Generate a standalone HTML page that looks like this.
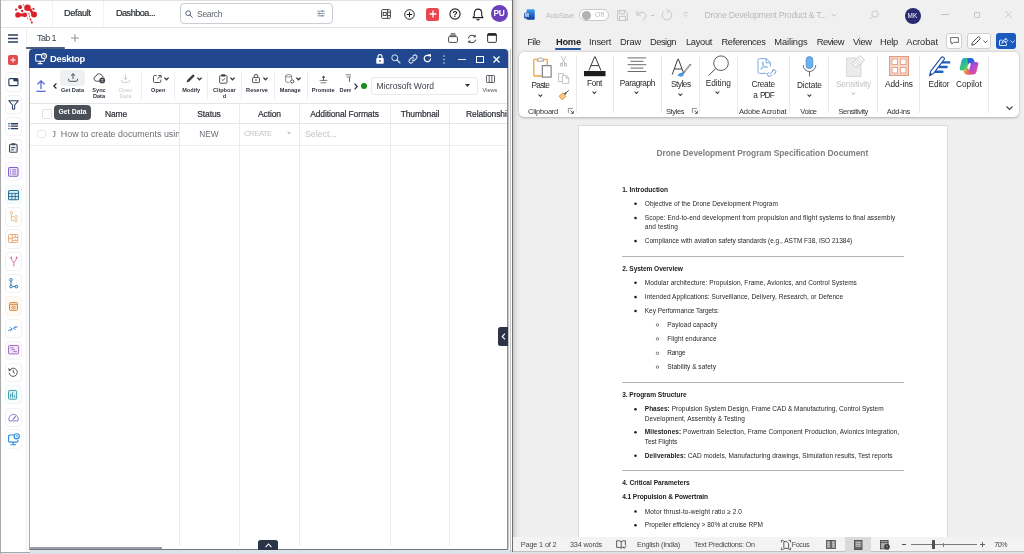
<!DOCTYPE html>
<html lang="en">
<head>
<meta charset="utf-8">
<title>Desktop - Drone Development Program Specification Document</title>
<style>
*{box-sizing:border-box;margin:0;padding:0}
html,body{width:1024px;height:554px;overflow:hidden;background:#fff}
body{position:relative;font-family:"Liberation Sans",sans-serif;color:#222;-webkit-font-smoothing:antialiased}
.a{position:absolute}
.t{position:absolute;white-space:nowrap;line-height:1}
.c{transform:translateX(-50%);text-align:center}
svg{position:absolute;overflow:visible}
/* ---------- LEFT APP ---------- */
#L{left:0;top:0;width:512px;height:554px;background:#fff;overflow:hidden;will-change:transform}
#R{left:0;top:0;width:1024px;height:554px;overflow:hidden;will-change:transform}
.vsep{position:absolute;width:1px;background:#eceef1}
.sb{position:absolute;left:6px;width:14px;height:14px;border-radius:3px;background:#fff;box-shadow:0 0 0 1px #eceef2}
.tl{position:absolute;white-space:nowrap;line-height:1;font-size:5.6px;font-weight:bold;color:#2f3540;transform:translateX(-50%);text-align:center}
.hd{position:absolute;white-space:nowrap;line-height:1;font-size:8.5px;letter-spacing:-0.12px;color:#2b2f36;-webkit-text-stroke:0.2px #2b2f36;top:109.7px;transform:translateX(-50%)}
.gl{position:absolute;width:1px;background:#eaebec;top:103px;height:443px}
/* ---------- WORD ---------- */
.rsep{position:absolute;width:1px;background:#e9e9e9;top:56px;height:57px}
</style>
</head>
<body>
<div id="L" class="a">
<!--LSTART-->
<!-- top bar -->
<div class="a" style="left:0;top:0;width:512px;height:1px;background:#e2e2e2"></div>
<div class="a" style="left:0;top:0;width:1px;height:554px;background:#a9a9a9"></div>
<div class="a" style="left:1px;top:27px;width:511px;height:1px;background:#e3e5e9"></div>
<svg style="left:0;top:0" width="50" height="27" viewBox="0 0 50 27">
 <g fill="#d9232e">
  <circle cx="16.1" cy="9.6" r="1.15"/><circle cx="20.1" cy="7.1" r="2.05"/><circle cx="23.4" cy="4.8" r="0.6"/>
  <circle cx="27.5" cy="7.8" r="3.3"/><circle cx="22.2" cy="11.1" r="1.25"/><circle cx="33.5" cy="8.8" r="1.15"/>
  <circle cx="17.9" cy="14.9" r="2.7"/><circle cx="24.9" cy="14.9" r="2.3"/><rect x="18" y="13.4" width="7" height="3" />
  <circle cx="34" cy="14.4" r="3"/><path d="M28.4 9.4L31.4 8.6L33.4 12.6L31.4 13.4Z"/>
  <circle cx="29.2" cy="13.6" r="0.6"/><circle cx="29.4" cy="16.2" r="0.6"/><circle cx="27.7" cy="18.2" r="0.6"/>
  <circle cx="30.5" cy="19.5" r="0.9"/><circle cx="31.8" cy="22.5" r="1.1"/>
 </g>
 <path d="M27.5 12L29.5 16.5L31.8 22.5" stroke="#d9232e" stroke-width="0.35" fill="none"/>
</svg>
<div class="vsep" style="left:52px;top:1px;height:26px;background:#f1f2f4"></div>
<div class="vsep" style="left:103px;top:1px;height:26px;background:#f1f2f4"></div>
<div class="t" style="left:64px;top:9px;font-size:9.1px;letter-spacing:-0.3px;color:#1f2329;-webkit-text-stroke:0.18px #1f2329">Default</div>
<div class="t" style="left:116px;top:9px;font-size:9.1px;letter-spacing:-0.5px;color:#1f2329;-webkit-text-stroke:0.18px #1f2329">Dashboa...</div>
<div class="a" style="left:180px;top:3px;width:153px;height:21px;border:1px solid #c9cdd4;border-radius:4px;background:#fff"></div>
<svg style="left:185px;top:9.5px" width="8" height="8" viewBox="0 0 8 8"><circle cx="3.2" cy="3.2" r="2.4" fill="none" stroke="#4a5568" stroke-width="0.9"/><path d="M5 5 L7.3 7.3" stroke="#4a5568" stroke-width="0.9" stroke-linecap="round"/></svg>
<div class="t" style="left:197px;top:9.5px;font-size:8.6px;letter-spacing:-0.35px;color:#5f6670">Search</div>
<svg style="left:317px;top:10px" width="8" height="7" viewBox="0 0 8 7"><g stroke="#6f8098" stroke-width="0.8" fill="none"><path d="M0.3 1.2H7.7M0.3 3.5H7.7M0.3 5.8H7.7"/><path d="M5.5 0.3V2.1M2.4 2.6V4.4M5 4.9V6.7" stroke-width="1"/></g></svg>
<!-- right icons -->
<svg style="left:381px;top:9px" width="10" height="10" viewBox="0 0 10 10"><g fill="none" stroke="#333" stroke-width="0.9"><rect x="0.6" y="0.6" width="8.8" height="8.8" rx="1"/><rect x="2.2" y="3.4" width="3" height="3"/><path d="M6.6 0.6V9.4M6.6 3.2H9.4M6.6 6.6H9.4"/></g></svg>
<svg style="left:403.5px;top:8.5px" width="11" height="11" viewBox="0 0 11 11"><circle cx="5.5" cy="5.5" r="4.8" fill="none" stroke="#222" stroke-width="1"/><path d="M5.5 2.8V8.2M2.8 5.5H8.2" stroke="#222" stroke-width="1"/></svg>
<div class="a" style="left:426px;top:7.5px;width:13px;height:13px;border-radius:2.5px;background:#e9474f"></div>
<svg style="left:428.5px;top:10px" width="8" height="8" viewBox="0 0 8 8"><path d="M4 0.6V7.4M0.6 4H7.4" stroke="#fff" stroke-width="1.3"/></svg>
<svg style="left:449px;top:8px" width="12" height="12" viewBox="0 0 12 12"><circle cx="6" cy="6" r="5.1" fill="none" stroke="#222" stroke-width="1.1"/></svg>
<div class="t c" style="left:455px;top:10px;font-size:8.4px;font-weight:bold;color:#222">?</div>
<svg style="left:471.5px;top:7.5px" width="12" height="13" viewBox="0 0 12 13"><path d="M6 1.1C3.6 1.1 2.3 2.9 2.3 5V7.8L1 9.6H11L9.7 7.8V5C9.7 2.9 8.4 1.1 6 1.1Z" fill="none" stroke="#222" stroke-width="1.1" stroke-linejoin="round"/><path d="M4.7 11a1.4 1.4 0 0 0 2.6 0" fill="none" stroke="#222" stroke-width="1.1"/></svg>
<div class="a" style="left:490.5px;top:5px;width:17px;height:17px;border-radius:50%;background:#6c3fbd"></div>
<div class="t c" style="left:499px;top:9px;font-size:8.4px;color:#fff;font-weight:bold;letter-spacing:-0.2px">PU</div>
<!-- tab row -->
<svg style="left:8px;top:33.5px" width="10" height="9" viewBox="0 0 10 9"><path d="M0 1H10M0 4.5H10M0 8H10" stroke="#2c3e5e" stroke-width="1.3"/></svg>
<div class="vsep" style="left:26px;top:28px;height:524px;background:#eff0f3"></div>
<div class="t" style="left:37px;top:34px;font-size:9px;letter-spacing:-0.6px;color:#3b4350">Tab 1</div>
<svg style="left:71px;top:34px" width="8" height="8" viewBox="0 0 8 8"><path d="M4 0V8M0 4H8" stroke="#666" stroke-width="0.7"/></svg>
<div class="a" style="left:26px;top:47px;width:39px;height:2px;background:#46607f;border-radius:1px"></div>
<svg style="left:448px;top:33px" width="10" height="10" viewBox="0 0 10 10"><g fill="none" stroke="#333" stroke-width="0.9"><rect x="0.6" y="3.6" width="8.8" height="5.8" rx="0.8"/><path d="M1.8 2.2H8.2M2.8 0.8H7.2"/></g></svg>
<svg style="left:466.5px;top:33.5px" width="10" height="10" viewBox="0 0 10 10"><g fill="none" stroke="#333" stroke-width="1"><path d="M1.3 4.4A3.8 3.8 0 0 1 8 2.6"/><path d="M8.7 5.6A3.8 3.8 0 0 1 2 7.4"/></g><path d="M8.6 0.6V3.3H5.9Z M1.4 9.4V6.7H4.1Z" fill="#333"/></svg>
<svg style="left:486.5px;top:33px" width="10" height="10" viewBox="0 0 10 10"><rect x="0.6" y="0.6" width="8.8" height="8.8" rx="1.2" fill="none" stroke="#222" stroke-width="0.9"/><path d="M0.6 1.6Q0.6 0.6 1.6 0.6H8.4Q9.4 0.6 9.4 1.6V2.8H0.6Z" fill="#222"/></svg>
<!-- sidebar icons -->
<div class="a" style="left:8.3px;top:55.2px;width:9.7px;height:9.5px;border-radius:2px;background:#e5484f"></div>
<svg style="left:10.1px;top:56.9px" width="6" height="6" viewBox="0 0 6 6"><path d="M3 0.4V5.6M0.4 3H5.6" stroke="#fff" stroke-width="1.1"/></svg>
<div class="a" style="left:5.7px;top:73.4px;width:15.4px;height:17.2px;border-radius:3px;background:#fff;box-shadow:0 0 0 0.8px #f0eef0"></div>
<svg style="left:8.4px;top:78px" width="10.8" height="8.2" viewBox="0 0 10 8"><rect x="0.55" y="0.55" width="8.9" height="6.9" rx="1.1" fill="none" stroke="#2c3e5e" stroke-width="1.1"/><rect x="5" y="0.6" width="4.4" height="2.7" fill="#2c3e5e"/></svg>
<div class="a" style="left:5.7px;top:95.8px;width:15.4px;height:17.2px;border-radius:3px;background:#fff;box-shadow:0 0 0 0.8px #f0eef0"></div>
<svg style="left:8.1px;top:99.8px" width="11.2" height="10" viewBox="0 0 11 10"><path d="M0.7 0.7H10.3L6.6 5V8.6Q6.6 9.3 5.9 9.3H5.1Q4.4 9.3 4.4 8.6V5Z" fill="none" stroke="#2c3e5e" stroke-width="1.05" stroke-linejoin="round"/></svg>
<div class="a" style="left:5.7px;top:118.0px;width:15.4px;height:17.2px;border-radius:3px;background:#fff;box-shadow:0 0 0 0.8px #f0eef0"></div>
<svg style="left:8.1px;top:123.4px" width="10.2" height="6.4" viewBox="0 0 10 6.4"><path d="M2.6 0.8H10M2.6 3.2H10M2.6 5.6H10" stroke="#2c3e5e" stroke-width="1.35"/><path d="M0 0.8H1.7M0 3.2H1.7M0 5.6H1.7" stroke="#5a7ea8" stroke-width="1.35"/></svg>
<div class="a" style="left:5.7px;top:140.0px;width:15.4px;height:17.2px;border-radius:3px;background:#fff;box-shadow:0 0 0 0.8px #f0eef0"></div>
<svg style="left:8.9px;top:143.3px" width="8.7" height="9.8" viewBox="0 0 8.7 9.8"><rect x="0.55" y="1.3" width="7.6" height="8" rx="1.1" fill="#eef1f5" stroke="#3b475c" stroke-width="1.05"/><rect x="2.5" y="0.2" width="3.7" height="2" rx="0.6" fill="#3b475c"/><path d="M2.1 4.6H6.4M2.1 6.8H4.8" stroke="#3b475c" stroke-width="1"/></svg>
<div class="a" style="left:5.7px;top:163.0px;width:15.4px;height:17.2px;border-radius:3px;background:#fdfbff;box-shadow:0 0 0 0.8px #f3edf9"></div>
<svg style="left:8.1px;top:166.8px" width="10.6" height="9.8" viewBox="0 0 10.6 9.8"><rect x="0.55" y="0.55" width="9.5" height="8.7" rx="1.2" fill="#f1e8fa" stroke="#8460c4" stroke-width="1.05"/><path d="M4.2 2.8H8.2M4.2 4.9H8.2M4.2 7H8.2" stroke="#8460c4" stroke-width="0.9"/><path d="M2 2.8H3.1M2 4.9H3.1M2 7H3.1" stroke="#8460c4" stroke-width="1"/></svg>
<div class="a" style="left:5.7px;top:186.0px;width:15.4px;height:17.2px;border-radius:3px;background:#f8fcfe;box-shadow:0 0 0 0.8px #e8f3f7"></div>
<svg style="left:8.1px;top:189.6px" width="11.1" height="10.4" viewBox="0 0 11.1 10.4"><rect x="0.55" y="0.55" width="10" height="9.3" rx="1.2" fill="#d8eff7" stroke="#2a6f8f" stroke-width="1.05"/><path d="M0.6 3.4H10.5M0.6 6.5H10.5M3.9 3.4V9.8M7.2 3.4V9.8" stroke="#2a6f8f" stroke-width="0.9"/></svg>
<div class="a" style="left:5.7px;top:208.4px;width:15.4px;height:17.2px;border-radius:3px;background:#fff;box-shadow:0 0 0 0.8px #f0eef0"></div>
<svg style="left:8.9px;top:210.7px" width="9" height="11.3" viewBox="0 0 9 11.3"><g fill="none" stroke="#e6bd86" stroke-width="0.9"><circle cx="2.4" cy="1.8" r="1.35"/><circle cx="7" cy="5.8" r="1.35"/><circle cx="7" cy="9.6" r="1.35"/><path d="M2.4 3.2V9.6H5.6M2.4 5.8H5.6"/></g></svg>
<div class="a" style="left:5.7px;top:230.4px;width:15.4px;height:17.2px;border-radius:3px;background:#fff;box-shadow:0 0 0 0.8px #f0eef0"></div>
<svg style="left:8.4px;top:234px" width="10.3" height="9" viewBox="0 0 10.3 9"><g fill="none" stroke="#e2a272" stroke-width="0.9"><rect x="0.5" y="0.5" width="9.3" height="8" rx="0.8"/><path d="M4.2 0.5V8.5M0.5 4.6H4.2M4.2 3.4H9.8M7.2 0.5V3.4M7.2 5.4V6.4M4.2 6.4H9.8"/></g></svg>
<div class="a" style="left:5.7px;top:252.9px;width:15.4px;height:17.2px;border-radius:3px;background:#fff;box-shadow:0 0 0 0.8px #f0eef0"></div>
<svg style="left:9.7px;top:256px" width="7.8" height="10.6" viewBox="0 0 7.8 10.6"><g fill="none" stroke="#cf5f9f" stroke-width="0.9"><path d="M1.2 1.6Q1.4 5 3.9 6.2Q6.4 5 6.6 1.6M3.9 6.2V10.4"/></g><path d="M0 2.2L1.2 0.2L2.4 2.2Z M5.4 2.2L6.6 0.2L7.8 2.2Z" fill="#cf5f9f"/></svg>
<div class="a" style="left:5.7px;top:274.9px;width:15.4px;height:17.2px;border-radius:3px;background:#fff;box-shadow:0 0 0 0.8px #f0eef0"></div>
<svg style="left:8.9px;top:278px" width="9.3" height="10.5" viewBox="0 0 9.3 10.5"><g fill="none" stroke="#2a78b8" stroke-width="1"><rect x="0.8" y="0.6" width="2.4" height="2.4" rx="0.6"/><circle cx="2" cy="8.6" r="1.3"/><rect x="6.2" y="7.4" width="2.4" height="2.4" rx="0.6"/><path d="M2 3V7.3M3.3 8.6H6.2"/></g></svg>
<div class="a" style="left:5.7px;top:297.4px;width:15.4px;height:17.2px;border-radius:3px;background:#fffaf4;box-shadow:0 0 0 0.8px #fbeedf"></div>
<svg style="left:8.9px;top:301.5px" width="9" height="8.9" viewBox="0 0 9 8.9"><rect x="0.5" y="0.5" width="8" height="7.9" rx="0.9" fill="#fbe3c8" stroke="#d88a4a" stroke-width="0.95"/><path d="M0.5 2.4H8.5" stroke="#d88a4a" stroke-width="0.9"/><ellipse cx="4.5" cy="5.4" rx="2" ry="1.25" fill="none" stroke="#d88a4a" stroke-width="0.75"/><circle cx="4.5" cy="5.4" r="0.5" fill="#d88a4a"/></svg>
<div class="a" style="left:5.7px;top:319.9px;width:15.4px;height:17.2px;border-radius:3px;background:#fff;box-shadow:0 0 0 0.8px #f0eef0"></div>
<svg style="left:8.4px;top:325px" width="9.8" height="7.2" viewBox="0 0 9.8 7.2"><g fill="none" stroke="#3a8ad8" stroke-width="0.9" stroke-linecap="round"><path d="M0.4 5.4L4 4.2M2.6 2.6L4.1 4.2L2.4 5.8"/><path d="M9.4 1.8L5.8 3M7.2 4.6L5.7 3L7.4 1.4"/></g></svg>
<div class="a" style="left:5.7px;top:341.9px;width:15.4px;height:17.2px;border-radius:3px;background:#fdfaff;box-shadow:0 0 0 0.8px #f3ebf7"></div>
<svg style="left:8.1px;top:345.2px" width="11.1" height="9.4" viewBox="0 0 11.1 9.4"><rect x="0.5" y="0.5" width="10.1" height="8.4" rx="0.9" fill="#f1e4f8" stroke="#9a6ab8" stroke-width="0.95"/><path d="M2.2 2.8H5.4M3.6 4.7H7M5.4 6.6H8.8" stroke="#9a6ab8" stroke-width="0.9"/></svg>
<div class="a" style="left:5.7px;top:363.9px;width:15.4px;height:17.2px;border-radius:3px;background:#fff;box-shadow:0 0 0 0.8px #f0eef0"></div>
<svg style="left:8.2px;top:367.4px" width="10" height="10" viewBox="0 0 10 10"><g fill="none" stroke="#4e535b" stroke-width="0.95"><path d="M1.7 3.1A4.1 4.1 0 1 1 1.1 5.8"/><path d="M5.2 2.7V5.2L6.9 6.3"/></g><path d="M0.2 1L0.9 4.2L3.7 2.9Z" fill="#4e535b"/></svg>
<div class="a" style="left:5.7px;top:386.2px;width:15.4px;height:17.2px;border-radius:3px;background:#f8fdfd;box-shadow:0 0 0 0.8px #e6f3f5"></div>
<svg style="left:8.4px;top:389.9px" width="9.1" height="9.7" viewBox="0 0 9.1 9.7"><rect x="0.5" y="0.5" width="8.1" height="8.7" rx="0.9" fill="#d5eef1" stroke="#3a9aa8" stroke-width="0.95"/><path d="M2.6 4V7.4M4.55 2.4V7.4M6.5 5.2V7.4" stroke="#3a9aa8" stroke-width="1"/></svg>
<div class="a" style="left:5.7px;top:408.8px;width:15.4px;height:17.2px;border-radius:3px;background:#fff;box-shadow:0 0 0 0.8px #f0eef0"></div>
<svg style="left:8.1px;top:413.8px" width="11.1" height="7.4" viewBox="0 0 11.1 7.4"><path d="M1.2 6.9A4.7 4.7 0 1 1 9.9 6.9Z" fill="none" stroke="#8a70c8" stroke-width="0.95" stroke-linejoin="round"/><path d="M5 5.4L7.6 2.4" stroke="#8a70c8" stroke-width="1.1" stroke-linecap="round"/></svg>
<div class="a" style="left:5.7px;top:430.4px;width:15.4px;height:17.2px;border-radius:3px;background:#fff;box-shadow:0 0 0 0.8px #f3f5f8"></div>
<svg style="left:8.1px;top:432.5px" width="11.8" height="13" viewBox="0 0 11.8 13"><g fill="none" stroke="#2a8ae0" stroke-width="1.15"><path d="M6 2H1.7Q0.6 2 0.6 3.1V8.1Q0.6 9.2 1.7 9.2H8.8Q9.9 9.2 9.9 8.1V7"/><path d="M5.2 9.2V11.4M2.4 11.8H8"/><circle cx="8.7" cy="3.3" r="2.6"/><path d="M8.7 2V3.4H9.9" stroke-width="0.8"/></g></svg>
<!-- desktop window -->
<div class="a" style="left:29px;top:49px;width:478.5px;height:501px;background:#fff;border-radius:4px 4px 2px 2px;box-shadow:0.5px 0 1px rgba(60,70,90,.35)"></div>
<div class="a" style="left:29px;top:49px;width:478.5px;height:19px;background:#21488f;border-radius:4px 4px 0 0"></div>
<div class="a" style="left:29px;top:68px;width:1px;height:481px;background:#a3acb9"></div>
<div class="a" style="left:506.6px;top:68px;width:1px;height:481px;background:#8792a3"></div>
<svg style="left:35px;top:52.5px" width="12" height="12" viewBox="0 0 12 12"><g fill="none" stroke="#fff" stroke-width="1.1"><path d="M6 1.6H1.6Q0.7 1.6 0.7 2.5V7.3Q0.7 8.2 1.6 8.2H8.6Q9.5 8.2 9.5 7.3V6.6"/><path d="M5.1 8.2V10.2M2.8 10.6H7.4"/><circle cx="9" cy="3.1" r="2.5"/><path d="M9 1.8V3.2H10.2" stroke-width="0.8"/></g></svg>
<div class="t" style="left:50px;top:54px;font-size:9.4px;font-weight:bold;color:#fff;letter-spacing:-0.3px">Desktop</div>
<!-- title icons -->
<svg style="left:375.5px;top:53.5px" width="8" height="10" viewBox="0 0 8 10"><rect x="0.3" y="4" width="7.4" height="5.7" rx="0.8" fill="#fff"/><path d="M2 4V2.6A2 2 0 0 1 6 2.6V4" fill="none" stroke="#fff" stroke-width="1.1"/><circle cx="4" cy="6.8" r="0.9" fill="#21488f"/></svg>
<svg style="left:391px;top:54px" width="10" height="10" viewBox="0 0 10 10"><circle cx="3.8" cy="3.8" r="3" fill="none" stroke="#dfe6f3" stroke-width="1"/><path d="M6 6L9 9" stroke="#dfe6f3" stroke-width="1.1" stroke-linecap="round"/></svg>
<svg style="left:408px;top:54px" width="10" height="10" viewBox="0 0 10 10"><g fill="none" stroke="#dfe6f3" stroke-width="1.1" stroke-linecap="round"><path d="M4.2 5.8A2 2 0 0 0 7 5.8L8.6 4.2A2 2 0 0 0 5.8 1.4L5 2.2"/><path d="M5.8 4.2A2 2 0 0 0 3 4.2L1.4 5.8A2 2 0 0 0 4.2 8.6L5 7.8"/></g></svg>
<svg style="left:422.5px;top:54px" width="9" height="9" viewBox="0 0 9 9"><path d="M7.6 4.5A3.2 3.2 0 1 1 6.4 2" fill="none" stroke="#fff" stroke-width="1.2"/><path d="M4.8 0.2H8V3.4Z" fill="#fff"/></svg>
<svg style="left:443px;top:54.5px" width="2" height="9" viewBox="0 0 2 9"><g fill="#dfe6f3"><circle cx="1" cy="1" r="0.75"/><circle cx="1" cy="4.5" r="0.75"/><circle cx="1" cy="8" r="0.75"/></g></svg>
<div class="a" style="left:457.5px;top:58.5px;width:8.5px;height:1.2px;background:#e6ecf7"></div>
<div class="a" style="left:476px;top:55.5px;width:7.5px;height:7.5px;border:1.2px solid #fff"></div>
<svg style="left:493px;top:55.5px" width="7" height="7" viewBox="0 0 7 7"><path d="M0.5 0.5L6.5 6.5M6.5 0.5L0.5 6.5" stroke="#fff" stroke-width="1.3"/></svg>
<!-- toolbar -->
<div class="a" style="left:30px;top:103px;width:477px;height:1px;background:#e3e5e8"></div>
<svg style="left:36px;top:80px" width="10" height="12" viewBox="0 0 10 12"><g fill="none" stroke="#4a60d2" stroke-width="1.2"><path d="M5 9V1M1.4 4.4L5 0.9L8.6 4.4"/><path d="M0.4 11.3H9.6" stroke-width="1.2"/></g></svg>
<svg style="left:52.5px;top:82.5px" width="4" height="6" viewBox="0 0 4 6"><path d="M3.4 0.5L0.8 3L3.4 5.5" fill="none" stroke="#22262d" stroke-width="1.15"/></svg>
<div class="a" style="left:60px;top:69.5px;width:24.5px;height:16px;background:#eff0f1;border-radius:3px"></div>
<svg style="left:67.5px;top:73px" width="10" height="9" viewBox="0 0 10 9"><g fill="none" stroke="#3a3f48" stroke-width="0.9"><path d="M5 6V0.8M3 2.6L5 0.7L7 2.6"/><path d="M0.6 5.8V7.2Q0.6 8.3 1.7 8.3H8.3Q9.4 8.3 9.4 7.2V5.8"/></g></svg>
<div class="tl" style="left:72.5px;top:88.1px">Get Data</div>
<svg style="left:93px;top:73px" width="13" height="11" viewBox="0 0 13 11"><path d="M6.6 8.2H3.2A2.6 2.6 0 0 1 3 3.1A3.3 3.3 0 0 1 9.4 3.4A2.3 2.3 0 0 1 10.9 4.6" fill="none" stroke="#3a3f48" stroke-width="0.9"/><circle cx="9.2" cy="7.4" r="2.9" fill="#3a3f48"/><path d="M7.8 6.6H10.4M10.6 8.2H8" stroke="#fff" stroke-width="0.6"/></svg>
<div class="tl" style="left:99px;top:88.1px">Sync</div>
<div class="tl" style="left:99px;top:94.1px">Data</div>
<svg style="left:121px;top:73.5px" width="9" height="9" viewBox="0 0 9 9"><g fill="none" stroke="#c3c7cc" stroke-width="0.9"><path d="M4.5 0.4V5.6M2.4 3.6L4.5 5.7L6.6 3.6"/><path d="M0.5 6V7.2Q0.5 8.3 1.6 8.3H7.4Q8.5 8.3 8.5 7.2V6"/></g></svg>
<div class="tl" style="left:125.4px;top:88.1px;color:#c6cacf;font-weight:normal">Open</div>
<div class="tl" style="left:125.4px;top:94.1px;color:#c6cacf;font-weight:normal">Data</div>
<div class="vsep" style="left:141px;top:72px;height:28px"></div>
<svg style="left:152.5px;top:74.5px" width="9" height="8" viewBox="0 0 9 8"><g fill="none" stroke="#3a3f48" stroke-width="0.9"><path d="M3.6 0.5H1.5Q0.5 0.5 0.5 1.5V6.5Q0.5 7.5 1.5 7.5H6.8Q7.8 7.5 7.8 6.5V4.6"/><path d="M4.4 3.9L8 0.5M5.4 0.5H8.2V3.2"/></g></svg>
<svg style="left:164px;top:76.5px" width="5" height="4" viewBox="0 0 5 4"><path d="M0.4 0.6L2.5 2.8L4.6 0.6" fill="none" stroke="#30353d" stroke-width="1.25"/></svg>
<div class="tl" style="left:158.2px;top:88.1px">Open</div>
<div class="vsep" style="left:174px;top:72px;height:28px"></div>
<svg style="left:185.5px;top:74px" width="9" height="9" viewBox="0 0 9 9"><path d="M0.6 8.4L1.2 6L6.6 0.7Q7.2 0.2 7.8 0.8L8.2 1.2Q8.8 1.8 8.3 2.4L3 7.8Z" fill="#3a3f48"/></svg>
<svg style="left:197px;top:76.5px" width="5" height="4" viewBox="0 0 5 4"><path d="M0.4 0.6L2.5 2.8L4.6 0.6" fill="none" stroke="#30353d" stroke-width="1.25"/></svg>
<div class="tl" style="left:191.2px;top:88.1px">Modify</div>
<div class="vsep" style="left:207px;top:72px;height:28px"></div>
<svg style="left:219px;top:73.5px" width="9" height="10" viewBox="0 0 9 10"><g fill="none" stroke="#3a3f48" stroke-width="0.9"><rect x="0.6" y="1.6" width="7.4" height="7.6" rx="0.9"/><path d="M2.6 5.4L3.9 6.6L6 4.2"/></g><rect x="2.4" y="0.3" width="3.8" height="2.2" rx="0.5" fill="#3a3f48"/></svg>
<svg style="left:230px;top:76.5px" width="5" height="4" viewBox="0 0 5 4"><path d="M0.4 0.6L2.5 2.8L4.6 0.6" fill="none" stroke="#30353d" stroke-width="1.25"/></svg>
<div class="tl" style="left:224.4px;top:88.1px">Clipboar</div>
<div class="tl" style="left:224.4px;top:94.1px">d</div>
<div class="vsep" style="left:241px;top:72px;height:28px"></div>
<svg style="left:251.7px;top:73.5px" width="8" height="9" viewBox="0 0 8 9"><g fill="none" stroke="#3a3f48" stroke-width="0.9"><rect x="0.5" y="3.6" width="7" height="5" rx="0.8"/><path d="M2.2 3.6V2.2A1.8 1.8 0 0 1 5.8 2.2V3.6"/></g><circle cx="4" cy="6.1" r="0.8" fill="#3a3f48"/></svg>
<svg style="left:263px;top:76.5px" width="5" height="4" viewBox="0 0 5 4"><path d="M0.4 0.6L2.5 2.8L4.6 0.6" fill="none" stroke="#30353d" stroke-width="1.25"/></svg>
<div class="tl" style="left:257px;top:88.1px">Reserve</div>
<div class="vsep" style="left:273.5px;top:72px;height:28px"></div>
<svg style="left:284.8px;top:73.5px" width="10" height="10" viewBox="0 0 10 10"><g fill="none" stroke="#6a6f78" stroke-width="0.8"><path d="M0.6 1.8V7.2Q0.6 8.4 3.4 8.4H4.6M6.6 1.8V5"/><ellipse cx="3.6" cy="1.8" rx="3" ry="1.2"/><circle cx="7.2" cy="7.4" r="1.6" stroke="#3a3f48" stroke-width="0.9"/></g></svg>
<svg style="left:296px;top:76.5px" width="5" height="4" viewBox="0 0 5 4"><path d="M0.4 0.6L2.5 2.8L4.6 0.6" fill="none" stroke="#30353d" stroke-width="1.25"/></svg>
<div class="tl" style="left:290.2px;top:88.1px">Manage</div>
<div class="vsep" style="left:306.5px;top:72px;height:28px"></div>
<svg style="left:318.5px;top:74.5px" width="9" height="9" viewBox="0 0 9 9"><g fill="none" stroke="#3a3f48" stroke-width="0.8"><path d="M4.5 6V1"/><path d="M0.6 5.4H8.4M1.6 7.8H7.4" stroke="#5a5f68"/></g><path d="M2.7 2.8L4.5 0.4L6.3 2.8Z" fill="#3a3f48"/></svg>
<div class="tl" style="left:323.2px;top:88.1px">Promote</div>
<div class="a" style="left:339px;top:72px;width:12px;height:24px;overflow:hidden">
 <svg style="left:6px;top:2px" width="9" height="9" viewBox="0 0 9 9"><g fill="none" stroke="#5a5f68" stroke-width="0.8"><path d="M0.6 0.8H8.4M1.6 3H7.4"/><path d="M4.5 3.4V8" stroke="#3a3f48"/></g></svg>
 <div class="tl" style="left:8.2px;top:16px;transform:none;left:0.6px">Demote</div>
</div>
<svg style="left:353.5px;top:82.5px" width="4" height="7" viewBox="0 0 4 7"><path d="M0.6 0.6L3.2 3.5L0.6 6.4" fill="none" stroke="#22262d" stroke-width="1.15"/></svg>
<div class="a" style="left:361px;top:82.8px;width:6px;height:6px;border-radius:50%;background:#1b8a1e"></div>
<div class="a" style="left:370.5px;top:76.5px;width:107px;height:18px;border:1px solid #e8eaed;border-radius:3px;background:#fff"></div>
<div class="t" style="left:376.5px;top:81.5px;font-size:8.6px;color:#3a3f48">Microsoft Word</div>
<svg style="left:464.5px;top:84px" width="5" height="3" viewBox="0 0 5 3"><path d="M0 0H5L2.5 3Z" fill="#2b2f36"/></svg>
<svg style="left:486px;top:75px" width="9" height="8" viewBox="0 0 9 8"><g fill="none" stroke="#3a3f48" stroke-width="0.8"><rect x="0.5" y="0.5" width="8" height="7" rx="0.6"/><path d="M3.2 0.5V7.5M5.8 0.5V7.5"/></g></svg>
<div class="tl" style="left:490px;top:88.1px;font-weight:normal;color:#4a4f58">Views</div>
<!-- grid -->
<div class="a" style="left:30px;top:122.5px;width:477px;height:1px;background:#e6e7e9"></div>
<div class="a" style="left:30px;top:145px;width:477px;height:1px;background:#ededee"></div>
<div class="gl" style="left:179px"></div>
<div class="gl" style="left:239px"></div>
<div class="gl" style="left:299px"></div>
<div class="gl" style="left:390px"></div>
<div class="gl" style="left:449px"></div>
<div class="a" style="left:42px;top:109px;width:10px;height:10px;border:1px solid #dfe1e4;border-radius:1.5px"></div>
<div class="hd" style="left:116px">Name</div>
<div class="hd" style="left:209px">Status</div>
<div class="hd" style="left:269.5px">Action</div>
<div class="hd" style="left:344.5px">Additional Formats</div>
<div class="hd" style="left:420px">Thumbnail</div>
<div class="a" style="left:450px;top:104px;width:57px;height:18px;overflow:hidden"><div class="hd" style="left:16px;top:5.7px;transform:none">Relationships</div></div>
<div class="a" style="left:37px;top:129.5px;width:8.5px;height:8.5px;border:1px solid #e6e8ea;border-radius:1.5px"></div>
<div class="a" style="left:53px;top:126px;width:126px;height:16px;overflow:hidden">
 <div class="t" style="left:-1.5px;top:3.9px;font-size:8.9px;color:#6a6f76">J</div>
 <div class="t" style="left:7.8px;top:3.9px;font-size:8.9px;color:#6a6f76">How to create documents using</div>
</div>
<div class="t c" style="left:209px;top:130px;font-size:8.3px;color:#6a6f76">NEW</div>
<div class="t" style="left:244px;top:130.2px;font-size:7.9px;letter-spacing:-0.62px;color:#c4c6ca">CREATE</div>
<svg style="left:287px;top:132.4px" width="4" height="2.4" viewBox="0 0 5 3"><path d="M0 0H5L2.5 3Z" fill="#bfc2c6"/></svg>
<div class="t" style="left:305px;top:129.6px;font-size:8.8px;color:#bfc2c7">Select...</div>
<!-- tooltip -->
<div class="a" style="left:54px;top:105px;width:37px;height:14.5px;border-radius:4px;background:#4b5058"></div>
<div class="t c" style="left:72.5px;top:108.8px;font-size:6.8px;font-weight:bold;color:#fff">Get Data</div>
<!-- scrollbar + handles -->
<div class="a" style="left:30px;top:546.5px;width:132px;height:3px;background:#9a9ea6"></div>
<div class="a" style="left:29px;top:549px;width:479px;height:1px;background:#6e7a8a"></div>
<div class="a" style="left:258px;top:540px;width:19.5px;height:9.5px;border-radius:2.5px 2.5px 0 0;background:#2b3347"></div>
<svg style="left:264.5px;top:542.5px" width="7" height="5" viewBox="0 0 7 5"><path d="M0.6 4.2L3.5 1L6.4 4.2" fill="none" stroke="#fff" stroke-width="1.1"/></svg>
<div class="a" style="left:498px;top:327px;width:9.5px;height:18.5px;border-radius:2.5px 0 0 2.5px;background:#2b3347"></div>
<svg style="left:500.5px;top:332.5px" width="5" height="7" viewBox="0 0 5 7"><path d="M4 0.6L1.2 3.5L4 6.4" fill="none" stroke="#fff" stroke-width="1.1"/></svg>
<!-- bottom strip -->
<div class="a" style="left:1px;top:551.5px;width:511px;height:1px;background:#a4a8ae"></div>
<div class="a" style="left:1px;top:552.5px;width:511px;height:2px;background:#e3e6ea"></div>
<div class="a" style="left:30px;top:550px;width:482px;height:4px;background:#dde1e8"></div>
<!--LEND-->
</div>
<div id="R" class="a">
<!--RSTART-->
<div class="a" style="left:512px;top:0;width:512px;height:554px;background:#f0f0f0"></div>
<div class="a" style="left:512px;top:117px;width:512px;height:421px;background:#efefef"></div>
<div class="a" style="left:513px;top:0;width:7px;height:552px;background:linear-gradient(90deg,#c9c9c9,#e4e4e4 45%,rgba(236,236,236,0))"></div>
<div class="a" style="left:577.5px;top:124.8px;width:370.6px;height:414px;background:#fff;border:1px solid #dcdcdc;border-bottom:0"></div>
<svg style="left:523.5px;top:9px" width="11" height="11" viewBox="0 0 11 11"><defs><linearGradient id="wg" x1="0" y1="0" x2="0" y2="1"><stop offset="0" stop-color="#41a5ee"/><stop offset="0.33" stop-color="#2b7cd3"/><stop offset="0.66" stop-color="#185abd"/><stop offset="1" stop-color="#103f91"/></linearGradient></defs><rect x="2.6" y="0.3" width="8.1" height="10.4" rx="1.2" fill="url(#wg)"/><rect x="0.2" y="3.8" width="5.8" height="5.8" rx="0.9" fill="#1650b5"/><text x="3.1" y="8.4" font-family="Liberation Sans, sans-serif" font-size="4.6" font-weight="bold" fill="#fff" text-anchor="middle">W</text></svg>
<div class="t" style="left:545.8px;top:12.0px;font-size:7.6px;color:#bebebe;letter-spacing:-0.59px;">AutoSave</div>
<div class="a" style="left:579px;top:8.5px;width:29.5px;height:12.8px;border-radius:6.4px;background:#fff;border:1px solid #c9c9c9"></div>
<div class="a" style="left:581.6px;top:10.6px;width:9px;height:9px;border-radius:50%;background:#b2b2b2"></div>
<div class="t" style="left:595.0px;top:12.4px;font-size:6.8px;color:#bcbcbc;letter-spacing:0.15px;">Off</div>
<svg style="left:617px;top:9.5px" width="11" height="11" viewBox="0 0 11 11"><g fill="none" stroke="#c2c2c2" stroke-width="0.9"><path d="M0.6 0.6H8.6L10.4 2.4V10.4H0.6Z"/><path d="M2.6 0.6V3.8H7.6V0.6M2.4 10.4V6.4H8.6V10.4"/></g></svg>
<svg style="left:636px;top:9.5px" width="12" height="11" viewBox="0 0 12 11"><g fill="none" stroke="#c2c2c2" stroke-width="1"><path d="M1 1V5H5"/><path d="M1.2 4.8C3 2.2 6.6 1.4 8.8 3.4C11 5.6 9.6 8.8 6.4 10.2"/></g></svg>
<div class="a" style="left:650.5px;top:14.5px;width:3px;height:1px;background:#c2c2c2"></div>
<svg style="left:661px;top:9px" width="12" height="12" viewBox="0 0 12 12"><g fill="none" stroke="#c8c8c8" stroke-width="1"><path d="M7.6 1.6A4.8 4.8 0 1 1 3.2 2.2"/><path d="M5.2 0.4L7.8 1.6L6.4 4"/></g></svg>
<svg style="left:682.5px;top:12px" width="5" height="6" viewBox="0 0 5 6"><g fill="none" stroke="#c2c2c2" stroke-width="0.8"><path d="M0.5 0.6H4.5M0.8 2.6L2.5 4.6L4.2 2.6"/></g></svg>
<div class="t" style="left:704.5px;top:11.0px;font-size:8.7px;color:#b9b9b9;letter-spacing:-0.30px;">Drone Development Product &amp; T...</div>
<svg style="left:830.5px;top:13px" width="6" height="4" viewBox="0 0 6 4"><path d="M0.5 0.5L3 3.2L5.5 0.5" fill="none" stroke="#c2c2c2" stroke-width="0.9"/></svg>
<svg style="left:869px;top:10px" width="10" height="10" viewBox="0 0 10 10"><circle cx="6" cy="4" r="3.2" fill="none" stroke="#c6c6c6" stroke-width="0.9"/><path d="M3.6 6.4L0.8 9.2" stroke="#c6c6c6" stroke-width="0.9"/></svg>
<div class="a" style="left:904.5px;top:7.5px;width:16px;height:16px;border-radius:50%;background:#2a2a70"></div>
<div class="t" style="left:907.6px;top:12.6px;font-size:6.4px;color:#fff;letter-spacing:0.20px;">MK</div>
<div class="a" style="left:940.5px;top:14px;width:8px;height:1px;background:#c2c2c2"></div>
<div class="a" style="left:973.5px;top:11.5px;width:6.5px;height:6.5px;border:1px solid #c6c6c6;border-radius:1px"></div>
<svg style="left:1004.5px;top:11px" width="7" height="7" viewBox="0 0 7 7"><path d="M0.4 0.4L6.6 6.6M6.6 0.4L0.4 6.6" stroke="#c2c2c2" stroke-width="0.9"/></svg>
<div class="t" style="left:527.2px;top:37.6px;font-size:9.3px;color:#2a2a2a;letter-spacing:-0.50px;">File</div>
<div class="t" style="left:556.0px;top:37.6px;font-size:9.3px;color:#222;letter-spacing:-0.26px;font-weight:bold;">Home</div>
<div class="a" style="left:555.2px;top:47.6px;width:26px;height:2px;border-radius:1px;background:#2b579a"></div>
<div class="t" style="left:589.0px;top:37.6px;font-size:9.3px;color:#2a2a2a;letter-spacing:-0.18px;">Insert</div>
<div class="t" style="left:620.0px;top:37.6px;font-size:9.3px;color:#2a2a2a;letter-spacing:-0.18px;">Draw</div>
<div class="t" style="left:650.0px;top:37.6px;font-size:9.3px;color:#2a2a2a;letter-spacing:-0.49px;">Design</div>
<div class="t" style="left:686.0px;top:37.6px;font-size:9.3px;color:#2a2a2a;letter-spacing:-0.32px;">Layout</div>
<div class="t" style="left:721.5px;top:37.6px;font-size:9.3px;color:#2a2a2a;letter-spacing:-0.36px;">References</div>
<div class="t" style="left:774.3px;top:37.6px;font-size:9.3px;color:#2a2a2a;letter-spacing:-0.11px;">Mailings</div>
<div class="t" style="left:816.8px;top:37.6px;font-size:9.3px;color:#2a2a2a;letter-spacing:-0.58px;">Review</div>
<div class="t" style="left:853.0px;top:37.6px;font-size:9.3px;color:#2a2a2a;letter-spacing:-0.30px;">View</div>
<div class="t" style="left:880.0px;top:37.6px;font-size:9.3px;color:#2a2a2a;letter-spacing:-0.28px;">Help</div>
<div class="t" style="left:906.3px;top:37.6px;font-size:9.3px;color:#2a2a2a;letter-spacing:-0.05px;">Acrobat</div>
<div class="a" style="left:945.5px;top:33px;width:16.5px;height:15.7px;border:1px solid #cfcfcf;border-radius:3px;background:#fff"></div>
<svg style="left:949.5px;top:37px" width="9" height="8" viewBox="0 0 9 8"><path d="M0.6 0.6H8.4V5.4H3.6L1.8 7.2V5.4H0.6Z" fill="none" stroke="#444" stroke-width="0.8" stroke-linejoin="round"/></svg>
<div class="a" style="left:967.2px;top:33px;width:23.5px;height:15.7px;border:1px solid #cfcfcf;border-radius:3px;background:#fff"></div>
<svg style="left:970.5px;top:36px" width="10" height="10" viewBox="0 0 10 10"><path d="M0.8 9.2L1.4 6.6L7 1Q7.7 0.4 8.4 1L9 1.6Q9.6 2.3 9 3L3.4 8.6Z" fill="none" stroke="#333" stroke-width="0.85" stroke-linejoin="round"/></svg>
<svg style="left:983px;top:39.5px" width="5" height="3.5" viewBox="0 0 5 3.5"><path d="M0.4 0.5L2.5 2.8L4.6 0.5" fill="none" stroke="#333" stroke-width="0.8"/></svg>
<div class="a" style="left:996px;top:33px;width:20.3px;height:15.7px;border-radius:3px;background:#185abd"></div>
<svg style="left:999.3px;top:36.5px" width="9" height="9" viewBox="0 0 9 9"><g fill="none" stroke="#fff" stroke-width="0.85"><path d="M3.4 3.2H1Q0.5 3.2 0.5 3.8V8Q0.5 8.5 1 8.5H7Q7.5 8.5 7.5 8V6.4"/><path d="M3 6.4C3.2 4 4.6 2.8 6.4 2.8V1L8.7 3.6L6.4 6V4.4C5 4.4 3.8 5 3 6.4Z" stroke-linejoin="round"/></g></svg>
<svg style="left:1009.8px;top:39.5px" width="5" height="3.5" viewBox="0 0 5 3.5"><path d="M0.4 0.5L2.5 2.8L4.6 0.5" fill="none" stroke="#fff" stroke-width="0.8"/></svg>
<div class="a" style="left:519px;top:51.5px;width:499.8px;height:65.5px;background:#fff;border-radius:5px;box-shadow:0 0.5px 2.5px rgba(0,0,0,.28)"></div>
<div class="rsep" style="left:576.0px"></div>
<div class="rsep" style="left:613.0px"></div>
<div class="rsep" style="left:661.0px"></div>
<div class="rsep" style="left:698.9px"></div>
<div class="rsep" style="left:736.8px"></div>
<div class="rsep" style="left:788.8px"></div>
<div class="rsep" style="left:827.7px"></div>
<div class="rsep" style="left:876.9px"></div>
<div class="rsep" style="left:918.8px"></div>
<div class="rsep" style="left:987.8px"></div>
<svg style="left:532.5px;top:56.5px" width="19" height="21" viewBox="0 0 19 21"><path d="M4.6 2.4H1.6Q0.8 2.4 0.8 3.2V18.2Q0.8 19 1.6 19H8.8M10.4 2.4H13.4Q14.2 2.4 14.2 3.2V8" fill="none" stroke="#e9a63f" stroke-width="1.3"/><path d="M4.4 4.2V2.6Q4.4 2 5 2H5.8Q6.2 0.6 7.5 0.6Q8.8 0.6 9.2 2H10Q10.6 2 10.6 2.6V4.2Z" fill="#fff" stroke="#8a8a8a" stroke-width="0.8"/><rect x="9.3" y="8.7" width="8.8" height="11.4" fill="#fff" stroke="#6b6b6b" stroke-width="1"/></svg>
<div class="t" style="left:531.6px;top:81.1px;font-size:8.3px;color:#2a2a2a;letter-spacing:-0.76px;">Paste</div>
<svg style="left:537.6px;top:93.6px" width="4.8" height="3" viewBox="0 0 4.8 3"><path d="M0.5 0.5L2.4 2.4L4.3 0.5" fill="none" stroke="#383838" stroke-width="1.05"/></svg>
<svg style="left:560px;top:56.3px" width="7" height="10.5" viewBox="0 0 7 10.5"><g fill="none" stroke="#b4b4b4" stroke-width="0.8"><path d="M1.2 0.3L5.2 8M5.8 0.3L1.8 8"/><rect x="0.5" y="7.6" width="2" height="2.4"/><rect x="4.5" y="7.6" width="2" height="2.4"/></g></svg>
<svg style="left:558px;top:73px" width="11.5" height="11" viewBox="0 0 11.5 11"><g fill="#fff" stroke="#b4b4b4" stroke-width="0.8"><path d="M0.5 0.5H5.4V8.6H0.5Z"/><path d="M4.4 2.6H8.4L10.8 5V10.4H4.4Z"/><path d="M8.2 2.8V5.2H10.6" fill="none"/></g></svg>
<svg style="left:558px;top:89.5px" width="11.5" height="10.5" viewBox="0 0 11.5 10.5"><path d="M1 6.2L5 2.8L8 6.4L4.2 9.8Z" fill="#f5c88a" stroke="#e8942e" stroke-width="0.9" stroke-linejoin="round"/><path d="M6.4 4.4L8.6 2.2" stroke="#555" stroke-width="1.6"/><path d="M8.8 2L10.8 0.4" stroke="#555" stroke-width="1"/></svg>
<div class="t" style="left:528.0px;top:108.0px;font-size:7.5px;color:#333;letter-spacing:-0.23px;">Clipboard</div>
<svg style="left:568.2px;top:108px" width="6" height="6" viewBox="0 0 6 6"><path d="M0.4 5V0.4H5" fill="none" stroke="#666" stroke-width="0.7"/><path d="M2.4 2.4L5 5M5.4 2.8V5.4H2.8" fill="none" stroke="#444" stroke-width="0.8"/></svg>
<svg style="left:584px;top:55.5px" width="22" height="21" viewBox="0 0 22 21"><path d="M4.8 14.6L10.6 0.8H11.2L17 14.6M6.9 9.6H14.9" fill="none" stroke="#3a3a3a" stroke-width="1"/><rect x="0" y="15" width="21.5" height="5.2" fill="#1e1e1e"/></svg>
<div class="t" style="left:587.0px;top:79.1px;font-size:8.3px;color:#2a2a2a;letter-spacing:-0.40px;">Font</div>
<svg style="left:591.9px;top:91.4px" width="4.8" height="3" viewBox="0 0 4.8 3"><path d="M0.5 0.5L2.4 2.4L4.3 0.5" fill="none" stroke="#383838" stroke-width="1.05"/></svg>
<svg style="left:627px;top:57px" width="20" height="16" viewBox="0 0 20 16"><path d="M0.6 0.9H19.2M3.5 4.3H16.4M0.6 7.7H19.2M3.5 11.1H16.4M0.6 14.5H19.2" stroke="#5a5a5a" stroke-width="0.9"/></svg>
<div class="t" style="left:619.8px;top:79.1px;font-size:8.3px;color:#2a2a2a;letter-spacing:-0.40px;">Paragraph</div>
<svg style="left:634.0px;top:91.4px" width="4.8" height="3" viewBox="0 0 4.8 3"><path d="M0.5 0.5L2.4 2.4L4.3 0.5" fill="none" stroke="#383838" stroke-width="1.05"/></svg>
<svg style="left:671px;top:57.5px" width="21" height="20" viewBox="0 0 21 20"><path d="M1.2 16.6L6.8 1.2H7.4L12.6 15M3.4 11H10.8" fill="none" stroke="#3a3a3a" stroke-width="1"/><path d="M19.4 6.6L12.2 15.2" stroke="#6b6b6b" stroke-width="1.6" stroke-linecap="round"/><path d="M19.2 6.8L13.4 13.8" stroke="#fff" stroke-width="0.6"/><path d="M6.4 17.6Q8.4 14 12 14.6Q13.8 16.2 12 18Q9.6 19.6 6.4 17.6Z" fill="#4a9be0"/></svg>
<div class="t" style="left:670.9px;top:80.1px;font-size:8.3px;color:#2a2a2a;letter-spacing:-0.48px;">Styles</div>
<svg style="left:678.0px;top:92.6px" width="4.8" height="3" viewBox="0 0 4.8 3"><path d="M0.5 0.5L2.4 2.4L4.3 0.5" fill="none" stroke="#383838" stroke-width="1.05"/></svg>
<div class="t" style="left:666.0px;top:108.0px;font-size:7.5px;color:#333;letter-spacing:-0.40px;">Styles</div>
<svg style="left:692.3px;top:108px" width="6" height="6" viewBox="0 0 6 6"><path d="M0.4 5V0.4H5" fill="none" stroke="#666" stroke-width="0.7"/><path d="M2.4 2.4L5 5M5.4 2.8V5.4H2.8" fill="none" stroke="#444" stroke-width="0.8"/></svg>
<svg style="left:707.5px;top:55px" width="22" height="22" viewBox="0 0 22 22"><circle cx="13" cy="8.2" r="7.3" fill="none" stroke="#4a4a4a" stroke-width="0.9"/><path d="M7.8 13.4L0.8 20.4" stroke="#4a4a4a" stroke-width="1"/></svg>
<div class="t" style="left:705.7px;top:79.1px;font-size:8.3px;color:#2a2a2a;letter-spacing:-0.04px;">Editing</div>
<svg style="left:715.1px;top:91.1px" width="4.8" height="3" viewBox="0 0 4.8 3"><path d="M0.5 0.5L2.4 2.4L4.3 0.5" fill="none" stroke="#383838" stroke-width="1.05"/></svg>
<svg style="left:756.5px;top:57.5px" width="19" height="19" viewBox="0 0 19 19"><g fill="none" stroke="#6f9fd8" stroke-width="0.9"><path d="M9.4 15.4H2.6Q1 15.4 1 13.8V2.2Q1 0.6 2.6 0.6H9.4L13.4 4.6V8.6"/><path d="M9.2 0.8V4.8H13.2"/><path d="M3.6 11.4C5.4 9 6.6 6.4 6.2 4.6C5.9 3.6 5 4 5.2 5.2C5.6 7.4 8 9.4 10 9.4C11 9.2 10.6 8.4 9.6 8.6C7.4 8.8 5 10 3.6 11.4Z" stroke-width="0.7"/><path d="M11.6 14.4L10.8 15.2A2 2 0 0 0 13.6 18L15 16.6M14.8 13L15.6 12.2A2 2 0 0 1 18.4 15L17 16.4M12.8 16L16.4 12.4" stroke="#5b8fd0" stroke-width="0.9"/></g></svg>
<div class="t" style="left:751.6px;top:80.1px;font-size:8.3px;color:#2a2a2a;letter-spacing:-0.30px;">Create</div>
<div class="t" style="left:753.2px;top:91.1px;font-size:8.3px;color:#2a2a2a;letter-spacing:-0.90px;word-spacing:1.6px;">a PDF</div>
<div class="t" style="left:739.0px;top:108.0px;font-size:7.5px;color:#333;letter-spacing:-0.14px;">Adobe Acrobat</div>
<svg style="left:802px;top:55.5px" width="15" height="21" viewBox="0 0 15 21"><rect x="4.2" y="0.6" width="6.6" height="12" rx="3.3" fill="#6fb0ea" stroke="#3f8ad8" stroke-width="0.8"/><path d="M1.2 9.2A6.3 6.3 0 0 0 13.8 9.2M7.5 15.6V20.4" fill="none" stroke="#5a5a5a" stroke-width="0.9"/></svg>
<div class="t" style="left:797.0px;top:81.1px;font-size:8.3px;color:#2a2a2a;letter-spacing:-0.15px;">Dictate</div>
<svg style="left:806.6px;top:93.6px" width="4.8" height="3" viewBox="0 0 4.8 3"><path d="M0.5 0.5L2.4 2.4L4.3 0.5" fill="none" stroke="#383838" stroke-width="1.05"/></svg>
<div class="t" style="left:800.3px;top:108.0px;font-size:7.5px;color:#333;letter-spacing:-0.41px;">Voice</div>
<svg style="left:845.5px;top:55.5px" width="20" height="21" viewBox="0 0 20 21"><path d="M0.6 2H9.6L15 7.4V20.4H0.6Z" fill="#ececec" stroke="#cfcfcf" stroke-width="0.8"/><g transform="rotate(-42 12 6)"><rect x="6.6" y="2.8" width="11.5" height="6.2" fill="#fff" stroke="#c4c4c4" stroke-width="0.8"/><path d="M9 2.8V9M11 2.8V9M13 2.8V9M15.4 2.8V9" stroke="#cfcfcf" stroke-width="0.9"/></g></svg>
<div class="t" style="left:836.0px;top:80.1px;font-size:8.3px;color:#c2c2c2;letter-spacing:-0.21px;">Sensitivity</div>
<svg style="left:850.8px;top:92.1px" width="4.8" height="3" viewBox="0 0 4.8 3"><path d="M0.5 0.5L2.4 2.4L4.3 0.5" fill="none" stroke="#c8c8c8" stroke-width="1.05"/></svg>
<div class="t" style="left:838.5px;top:108.0px;font-size:7.5px;color:#333;letter-spacing:-0.39px;">Sensitivity</div>
<svg style="left:889px;top:56.3px" width="20" height="20" viewBox="0 0 20 20"><rect x="0.6" y="0.6" width="18.8" height="18.8" fill="#f8ddd2" stroke="#e39a80" stroke-width="1.2"/><g fill="#fff" stroke="#e39a80" stroke-width="0.9"><rect x="3" y="3" width="5.6" height="5.6"/><rect x="11.4" y="3" width="5.6" height="5.6"/><rect x="3" y="11.4" width="5.6" height="5.6"/><rect x="11.4" y="11.4" width="5.6" height="5.6"/></g></svg>
<div class="t" style="left:885.0px;top:80.1px;font-size:8.3px;color:#222;letter-spacing:-0.02px;">Add-ins</div>
<div class="t" style="left:886.8px;top:108.0px;font-size:7.5px;color:#333;letter-spacing:-0.32px;">Add-ins</div>
<svg style="left:928.5px;top:56px" width="22" height="20.5" viewBox="0 0 22 20.5"><path d="M13.4 6.4H20.2M10.4 11H17.6M6.8 15.8H13.4" stroke="#1f5fc0" stroke-width="2.4" stroke-linecap="round"/><path d="M0.6 19.8L1.6 15.4L12.4 1.4Q13.2 0.4 14.4 1.2L15 1.6Q15.8 2.4 15.2 3.4L4.6 17.4Z" fill="#fff" stroke="#1d4f9f" stroke-width="1.1" stroke-linejoin="round"/><path d="M0.6 19.8L1.4 16.6L3.4 18.2Z" fill="#1d4f9f"/></svg>
<div class="t" style="left:928.6px;top:80.1px;font-size:8.3px;color:#2a2a2a;letter-spacing:-0.16px;">Editor</div>
<svg style="left:958.5px;top:56.5px" width="20" height="18.5" viewBox="0 0 20 18.5"><defs><linearGradient id="cp1" x1="0" y1="0" x2="1" y2="1"><stop offset="0" stop-color="#1fa0e8"/><stop offset="0.5" stop-color="#34c27a"/><stop offset="1" stop-color="#f2c531"/></linearGradient><linearGradient id="cp2" x1="0" y1="0" x2="1" y2="1"><stop offset="0" stop-color="#2a63d8"/><stop offset="0.45" stop-color="#b04ad8"/><stop offset="1" stop-color="#f0507a"/></linearGradient><linearGradient id="cp3" x1="0" y1="0" x2="1" y2="0"><stop offset="0" stop-color="#f0a030"/><stop offset="1" stop-color="#f0506a"/></linearGradient></defs><path d="M5.4 1H11.6Q13.4 1 12.8 3L10.2 11.6Q9.6 13.4 7.8 13.4H2.6Q0.2 13.4 0.8 10.8L2.6 3.4Q3.2 1 5.4 1Z" fill="url(#cp1)"/><path d="M14.6 17.5H8.4Q6.6 17.5 7.2 15.5L9.8 6.9Q10.4 5.1 12.2 5.1H17.4Q19.8 5.1 19.2 7.7L17.4 15.1Q16.8 17.5 14.6 17.5Z" fill="url(#cp2)"/><path d="M8.4 1H12Q14.4 1 15 3.2L15.6 5.1H12.2Q10.4 5.1 9.8 6.9L9.2 8.8Z" fill="#2a63d8"/><path d="M11.6 17.5H8Q5.6 17.5 5 15.3L4.4 13.4H7.8Q9.6 13.4 10.2 11.6L10.8 9.7Z" fill="url(#cp3)"/><ellipse cx="10" cy="9.2" rx="1.3" ry="3.4" transform="rotate(16 10 9.2)" fill="#fff"/></svg>
<div class="t" style="left:956.0px;top:80.1px;font-size:8.3px;color:#2a2a2a;letter-spacing:-0.02px;">Copilot</div>
<svg style="left:1005.5px;top:106.3px" width="7" height="4" viewBox="0 0 7 4"><path d="M0.5 0.5L3.5 3.4L6.5 0.5" fill="none" stroke="#444" stroke-width="1.15"/></svg>
<div class="a" style="left:512px;top:0;width:512px;height:537.3px;overflow:hidden"><div class="a" style="left:-512px;top:0;width:1024px;height:554px">
<div class="t" style="left:656.5px;top:149.1px;font-size:8.4px;color:#7f7f7f;letter-spacing:-0.04px;font-weight:bold;">Drone Development Program Specification Document</div>
<div class="t" style="left:622.2px;top:186.5px;font-size:6.6px;color:#1a1a1a;letter-spacing:-0.00px;font-weight:bold;">1. Introduction</div>
<div class="t" style="left:644.8px;top:200.6px;font-size:6.5px;color:#262626;letter-spacing:0.04px;">Objective of the Drone Development Program</div>
<div class="t" style="left:644.8px;top:214.6px;font-size:6.5px;color:#262626;letter-spacing:0.08px;">Scope: End-to-end development from propulsion and flight systems to final assembly</div>
<div class="t" style="left:644.8px;top:223.6px;font-size:6.5px;color:#262626;letter-spacing:0.13px;">and testing</div>
<div class="t" style="left:644.8px;top:237.6px;font-size:6.5px;color:#262626;letter-spacing:-0.00px;">Compliance with aviation safety standards (e.g., ASTM F38, ISO 21384)</div>
<div class="a" style="left:622px;top:255.8px;width:282px;height:1px;background:#b4b4b4"></div>
<div class="t" style="left:622.2px;top:265.5px;font-size:6.6px;color:#1a1a1a;letter-spacing:-0.07px;font-weight:bold;">2. System Overview</div>
<div class="t" style="left:644.8px;top:279.6px;font-size:6.5px;color:#262626;letter-spacing:0.07px;">Modular architecture: Propulsion, Frame, Avionics, and Control Systems</div>
<div class="t" style="left:644.8px;top:293.6px;font-size:6.5px;color:#262626;letter-spacing:0.06px;">Intended Applications: Surveillance, Delivery, Research, or Defence</div>
<div class="t" style="left:644.8px;top:307.6px;font-size:6.5px;color:#262626;letter-spacing:-0.04px;">Key Performance Targets:</div>
<div class="t" style="left:667.2px;top:321.6px;font-size:6.5px;color:#262626;letter-spacing:0.06px;">Payload capacity</div>
<div class="t" style="left:667.2px;top:335.6px;font-size:6.5px;color:#262626;letter-spacing:0.06px;">Flight endurance</div>
<div class="t" style="left:667.2px;top:349.6px;font-size:6.5px;color:#262626;letter-spacing:-0.19px;">Range</div>
<div class="t" style="left:667.2px;top:363.6px;font-size:6.5px;color:#262626;letter-spacing:0.04px;">Stability &amp; safety</div>
<div class="a" style="left:622px;top:382.1px;width:282px;height:1px;background:#b4b4b4"></div>
<div class="t" style="left:622.2px;top:391.5px;font-size:6.6px;color:#1a1a1a;letter-spacing:-0.06px;font-weight:bold;">3. Program Structure</div>
<div class="t" style="left:644.8px;top:405.6px;font-size:6.5px;color:#262626;letter-spacing:0.01px"><b style="color:#1a1a1a">Phases:</b> Propulsion System Design, Frame CAD &amp; Manufacturing, Control System</div>
<div class="t" style="left:644.8px;top:415.6px;font-size:6.5px;color:#262626;letter-spacing:0.06px;">Development, Assembly &amp; Testing</div>
<div class="t" style="left:644.8px;top:428.6px;font-size:6.5px;color:#262626;letter-spacing:0.06px"><b style="color:#1a1a1a">Milestones:</b> Powertrain Selection, Frame Component Production, Avionics Integration,</div>
<div class="t" style="left:644.8px;top:438.6px;font-size:6.5px;color:#262626;letter-spacing:-0.03px;">Test Flights</div>
<div class="t" style="left:644.8px;top:452.6px;font-size:6.5px;color:#262626;letter-spacing:0.05px"><b style="color:#1a1a1a">Deliverables:</b> CAD models, Manufacturing drawings, Simulation results, Test reports</div>
<div class="a" style="left:622px;top:470.2px;width:282px;height:1px;background:#b4b4b4"></div>
<div class="t" style="left:622.2px;top:479.5px;font-size:6.6px;color:#1a1a1a;letter-spacing:0.00px;font-weight:bold;">4. Critical Parameters</div>
<div class="t" style="left:622.2px;top:493.5px;font-size:6.6px;color:#1a1a1a;letter-spacing:-0.08px;font-weight:bold;">4.1 Propulsion &amp; Powertrain</div>
<div class="t" style="left:644.8px;top:508.6px;font-size:6.5px;color:#262626;letter-spacing:0.10px;">Motor thrust-to-weight ratio ≥ 2.0</div>
<div class="t" style="left:644.8px;top:521.5px;font-size:6.5px;color:#262626;letter-spacing:0.01px;">Propeller efficiency &gt; 80% at cruise RPM</div>
<div class="t" style="left:644.8px;top:536.5px;font-size:6.5px;color:#262626;letter-spacing:0.09px;">Battery capacity: Minimum 30 min under full payload</div>
<svg style="left:0;top:0" width="1024" height="554" viewBox="0 0 1024 554"><circle cx="635.5" cy="203.7" r="1.3" fill="#1f1f1f"/><circle cx="635.5" cy="218.0" r="1.3" fill="#1f1f1f"/><circle cx="635.5" cy="241.1" r="1.3" fill="#1f1f1f"/><circle cx="635.5" cy="282.8" r="1.3" fill="#1f1f1f"/><circle cx="635.5" cy="297.1" r="1.3" fill="#1f1f1f"/><circle cx="635.5" cy="311.0" r="1.3" fill="#1f1f1f"/><circle cx="657.5" cy="324.9" r="1.25" fill="none" stroke="#333" stroke-width="0.6"/><circle cx="657.5" cy="338.8" r="1.25" fill="none" stroke="#333" stroke-width="0.6"/><circle cx="657.5" cy="353.3" r="1.25" fill="none" stroke="#333" stroke-width="0.6"/><circle cx="657.5" cy="367.1" r="1.25" fill="none" stroke="#333" stroke-width="0.6"/><circle cx="635.5" cy="409.2" r="1.3" fill="#1f1f1f"/><circle cx="635.5" cy="432.3" r="1.3" fill="#1f1f1f"/><circle cx="635.5" cy="455.7" r="1.3" fill="#1f1f1f"/><circle cx="635.5" cy="511.5" r="1.3" fill="#1f1f1f"/><circle cx="635.5" cy="525.3" r="1.3" fill="#1f1f1f"/><circle cx="635.5" cy="540.9" r="1.3" fill="#1f1f1f"/></svg>
</div></div>
<div class="a" style="left:513px;top:537.3px;width:511px;height:13.7px;background:#f3f3f3"></div>
<div class="a" style="left:512px;top:551px;width:512px;height:1.2px;background:#c2c2c2"></div>
<div class="a" style="left:512px;top:552.2px;width:512px;height:1.8px;background:#e2e2e2"></div>
<div class="t" style="left:520.8px;top:541.1px;font-size:7.3px;color:#4a4a4a;letter-spacing:-0.15px;">Page 1 of 2</div>
<div class="t" style="left:570.0px;top:541.1px;font-size:7.3px;color:#4a4a4a;letter-spacing:-0.19px;">334 words</div>
<svg style="left:615.5px;top:540px" width="10.5" height="9" viewBox="0 0 10.5 9"><g fill="none" stroke="#3a3a3a" stroke-width="0.8"><path d="M5.2 1.6Q3.2 0.2 0.6 0.8V7.4Q3.2 6.8 5.2 8.2Q6.6 7 8.4 7.2"/><path d="M5.2 1.6V8.2M5.2 1.6Q6.8 0.4 9.4 0.8V5"/><path d="M7 7L8.4 8.4L10.2 5.4" stroke-width="0.7"/></g></svg>
<div class="t" style="left:637.0px;top:541.1px;font-size:7.3px;color:#4a4a4a;letter-spacing:-0.24px;">English (India)</div>
<div class="t" style="left:694.0px;top:541.1px;font-size:7.3px;color:#4a4a4a;letter-spacing:-0.22px;">Text Predictions: On</div>
<svg style="left:780.5px;top:539.5px" width="10" height="10" viewBox="0 0 10 10"><g fill="none" stroke="#3a3a3a" stroke-width="0.8"><path d="M2.8 1.6H5.8L7.6 3.4V8.4H2.8Z"/><path d="M0.4 2.4V0.4H2.4M7.6 0.4H9.6V2.4M9.6 7.6V9.6H7.6M2.4 9.6H0.4V7.6"/></g></svg>
<div class="t" style="left:791.8px;top:541.1px;font-size:7.3px;color:#4a4a4a;letter-spacing:-0.48px;">Focus</div>
<svg style="left:826px;top:540px" width="10" height="9" viewBox="0 0 10 9"><g fill="#9a9a9a" stroke="#4a4a4a" stroke-width="0.8"><rect x="0.5" y="0.5" width="4.2" height="8"/><rect x="5.3" y="0.5" width="4.2" height="8"/></g><path d="M1.6 2.6H3.6M1.6 4.4H3.6M1.6 6.2H3.6M6.4 2.6H8.4M6.4 4.4H8.4M6.4 6.2H8.4" stroke="#eee" stroke-width="0.6"/></svg>
<div class="a" style="left:845px;top:537px;width:26px;height:14.5px;background:#dadada"></div>
<svg style="left:853.5px;top:539.5px" width="8.5" height="10" viewBox="0 0 8.5 10"><rect x="0.5" y="0.5" width="7.5" height="9" fill="#8a8a8a" stroke="#4a4a4a" stroke-width="0.9"/><path d="M2 2.6H6.5M2 4.4H6.5M2 6.2H6.5" stroke="#e0e0e0" stroke-width="0.6"/><path d="M0.5 8H8" stroke="#4a4a4a" stroke-width="1"/></svg>
<svg style="left:880px;top:540px" width="10" height="10" viewBox="0 0 10 10"><rect x="0.5" y="0.5" width="7.6" height="8.4" fill="#a8a8a8" stroke="#4a4a4a" stroke-width="0.9"/><path d="M0.5 2.4H8.1" stroke="#4a4a4a" stroke-width="0.9"/><circle cx="7" cy="6.8" r="2.8" fill="#3a3a3a"/><path d="M7 5.6V7M7 7.8V8.3" stroke="#fff" stroke-width="0.7"/></svg>
<div class="a" style="left:902px;top:544.3px;width:4px;height:1px;background:#555"></div>
<div class="a" style="left:910.5px;top:544.4px;width:66.5px;height:0.8px;background:#7a7a7a"></div>
<div class="a" style="left:943.2px;top:542.8px;width:0.8px;height:4px;background:#7a7a7a"></div>
<div class="a" style="left:931.5px;top:540.2px;width:3.1px;height:9.2px;background:#4f4f4f;border-radius:0.6px"></div>
<svg style="left:980px;top:542.3px" width="5" height="5" viewBox="0 0 5 5"><path d="M2.5 0V5M0 2.5H5" stroke="#555" stroke-width="0.9"/></svg>
<div class="t" style="left:994.3px;top:541.1px;font-size:7.3px;color:#4a4a4a;letter-spacing:-0.70px;">70%</div>
<div class="a" style="left:509.5px;top:49px;width:1.8px;height:503px;background:#c6c6c6"></div>
<div class="a" style="left:511.6px;top:0;width:1.4px;height:552px;background:#6f6f6f"></div>
<!--REND-->
</div>
</body>
</html>
